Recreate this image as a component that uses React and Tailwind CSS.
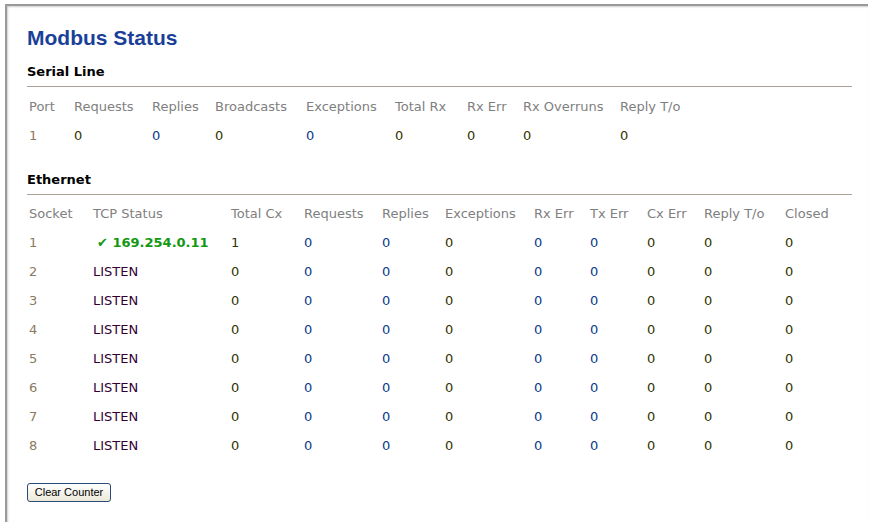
const D = "text-[#333300]";
const B = "text-[#0a3a8a]";
const serialHead = ["Port","Requests","Replies","Broadcasts","Exceptions","Total Rx","Rx Err","Rx Overruns","Reply T/o"];
const serialVals = [["1","text-[#8a7a60]"],["0",D],["0",B],["0",D],["0",B],["0",D],["0",D],["0",D],["0",D]];
const ethHead = ["Socket","TCP Status","Total Cx","Requests","Replies","Exceptions","Rx Err","Tx Err","Cx Err","Reply T/o","Closed"];
const ethColors = [B,B,D,B,B,D,D,D];

function Row({ cols, children, h }) {
  return <div className={`grid ${cols} ${h} items-center`}>{children}</div>;
}

export default function App() {
  const sCols = "grid-cols-[45px_78px_63px_91px_89px_72px_56px_97px_1fr]";
  const eCols = "grid-cols-[64px_138px_73px_78px_63px_89px_56px_57px_57px_81px_1fr]";
  return (
    <div className="w-[873px] h-[526px] bg-white relative" style={{ fontFamily: '"DejaVu Sans", Verdana, sans-serif' }}>
      <div className="absolute left-[5px] top-[4px] w-[863px] h-[518px] border-t-[2px] border-l-[2px] border-[#9a9a9a] shadow-[inset_1px_1px_2px_rgba(0,0,0,0.2)]"></div>
      <div className="pl-[27px] pr-[21px] pt-[25px] text-[13px]">
        <h1 className="text-[21px] leading-[26px] font-bold text-[#1a3f99]" style={{ fontFamily: '"Liberation Sans", Arial, sans-serif' }}>Modbus Status</h1>
        <div className="mt-[13px] font-bold text-black text-[13px] leading-[16px]">Serial Line</div>
        <div className="mt-[6px] border-t border-[#aaa294]"></div>
        <div className="pl-[2px] mt-[5px]">
          <Row cols={sCols} h="h-[29px]">{serialHead.map(h => <div key={h} className="text-[#808080]">{h}</div>)}</Row>
          <Row cols={sCols} h="h-[29px]">{serialVals.map(([v,c],i) => <div key={i} className={c}>{v}</div>)}</Row>
        </div>
        <div className="mt-[22px] font-bold text-black leading-[16px]">Ethernet</div>
        <div className="mt-[6px] border-t border-[#aaa294]"></div>
        <div className="pl-[2px] mt-[4px]">
          <Row cols={eCols} h="h-[29px]">{ethHead.map(h => <div key={h} className="text-[#808080]">{h}</div>)}</Row>
          {[1,2,3,4,5,6,7,8].map(n => (
            <Row key={n} cols={eCols} h="h-[29px]">
              <div className="text-[#8a7a60]">{n}</div>
              {n === 1
                ? <div className="text-[#119911] font-bold pl-[4px]">✔ 169.254.0.11</div>
                : <div className="text-[#330033]">LISTEN</div>}
              <div className={D}>{n === 1 ? "1" : "0"}</div>
              {ethColors.map((c,i) => <div key={i} className={c}>0</div>)}
            </Row>
          ))}
        </div>
        <button className="mt-[23px] h-[19px] w-[84px] text-[11px] leading-[15px] text-black border border-[#2a4a7a] rounded-[3px] bg-gradient-to-b from-white to-[#ece9d8]" style={{ fontFamily: '"Liberation Sans", Arial, sans-serif' }}>Clear Counter</button>
      </div>
    </div>
  );
}
